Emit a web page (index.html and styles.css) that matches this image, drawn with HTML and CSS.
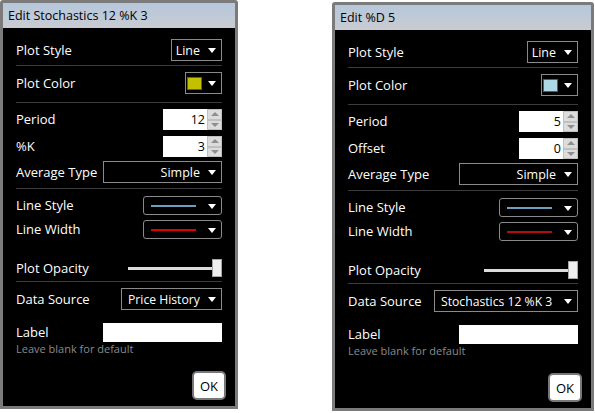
FILE: index.html
```html
<!DOCTYPE html>
<html>
<head>
<meta charset="utf-8">
<link rel="stylesheet" href="styles.css">
</head>
<body>
<div class="desk">
  <div class="win win-a">
    <div class="title">Edit Stochastics 12 %K 3</div>
    <div class="content">
      <div class="row r-style"><span class="lbl">Plot Style</span><div class="dd dd-style"><span class="val">Line</span><i class="arrow"></i></div></div>
      <div class="sep s1"></div>
      <div class="row r-color"><span class="lbl">Plot Color</span><div class="dd dd-color"><span class="swatch sw-yellow"></span><i class="arrow"></i></div></div>
      <div class="sep s2"></div>
      <div class="row r-num1"><span class="lbl">Period</span><div class="num"><span class="numval">12</span><span class="spin"><i class="up"></i><i class="down"></i></span></div></div>
      <div class="row r-num2"><span class="lbl">%K</span><div class="num"><span class="numval">3</span><span class="spin"><i class="up"></i><i class="down"></i></span></div></div>
      <div class="row r-avg"><span class="lbl">Average Type</span><div class="dd dd-avg"><span class="val">Simple</span><i class="arrow"></i></div></div>
      <div class="sep s3"></div>
      <div class="row r-ls"><span class="lbl">Line Style</span><div class="dd dd-line"><span class="ln ln-blue"></span><i class="arrow"></i></div></div>
      <div class="row r-lw"><span class="lbl">Line Width</span><div class="dd dd-line"><span class="ln ln-red"></span><i class="arrow"></i></div></div>
      <div class="row r-op"><span class="lbl">Plot Opacity</span><div class="slider"><span class="track"></span><span class="thumb"></span></div></div>
      <div class="sep s4"></div>
      <div class="row r-ds"><span class="lbl">Data Source</span><div class="dd dd-ds dd-ds-a"><span class="val">Price History</span><i class="arrow"></i></div></div>
      <div class="row r-label"><span class="lbl">Label</span><div class="txt"></div></div>
      <div class="hint">Leave blank for default</div>
      <div class="foot"><button class="ok">OK</button></div>
    </div>
  </div>

  <div class="win win-b">
    <div class="title">Edit %D 5</div>
    <div class="content">
      <div class="row r-style"><span class="lbl">Plot Style</span><div class="dd dd-style"><span class="val">Line</span><i class="arrow"></i></div></div>
      <div class="sep s1"></div>
      <div class="row r-color"><span class="lbl">Plot Color</span><div class="dd dd-color"><span class="swatch sw-blue"></span><i class="arrow"></i></div></div>
      <div class="sep s2"></div>
      <div class="row r-num1"><span class="lbl">Period</span><div class="num"><span class="numval">5</span><span class="spin"><i class="up"></i><i class="down"></i></span></div></div>
      <div class="row r-num2"><span class="lbl">Offset</span><div class="num"><span class="numval">0</span><span class="spin"><i class="up"></i><i class="down"></i></span></div></div>
      <div class="row r-avg"><span class="lbl">Average Type</span><div class="dd dd-avg"><span class="val">Simple</span><i class="arrow"></i></div></div>
      <div class="sep s3"></div>
      <div class="row r-ls"><span class="lbl">Line Style</span><div class="dd dd-line"><span class="ln ln-blue2"></span><i class="arrow"></i></div></div>
      <div class="row r-lw"><span class="lbl">Line Width</span><div class="dd dd-line"><span class="ln ln-darkred"></span><i class="arrow"></i></div></div>
      <div class="row r-op"><span class="lbl">Plot Opacity</span><div class="slider"><span class="track"></span><span class="thumb"></span></div></div>
      <div class="sep s4"></div>
      <div class="row r-ds"><span class="lbl">Data Source</span><div class="dd dd-ds dd-ds-b"><span class="val">Stochastics 12 %K 3</span><i class="arrow"></i></div></div>
      <div class="row r-label"><span class="lbl">Label</span><div class="txt"></div></div>
      <div class="hint">Leave blank for default</div>
      <div class="foot"><button class="ok">OK</button></div>
    </div>
  </div>
</div>
</body>
</html>
```

FILE: styles.css
```css
html, body {
  margin: 0;
  padding: 0;
  background: #ffffff;
}
body {
  font-family: "Open Sans", "Noto Sans", sans-serif;
  font-size: 12px;
  width: 595px;
  height: 413px;
  overflow: hidden;
}
.desk {
  display: flex;
  align-items: flex-start;
  gap: 94px;
}
.win {
  border: 3px solid #7b7b7b;
  border-radius: 3px 3px 0 0;
  background: #000;
  box-sizing: border-box;
  height: 409px;
  display: flex;
  flex-direction: column;
}
.win-a { width: 238px; }
.win-b { width: 262px; margin-top: 2px; }
.title {
  height: 25px;
  line-height: 25px;
  padding-left: 5px;
  background: linear-gradient(#b6c7dc, #c9ccd1);
  color: #000;
  font-size: 12.5px;
  white-space: nowrap;
}
.content {
  flex: 1;
  padding: 11px 13px 0 13px;
  color: #fff;
  display: flex;
  flex-direction: column;
}
.row {
  display: flex;
  justify-content: space-between;
  align-items: center;
}
.lbl {
  white-space: nowrap;
  color: #fff;
  font-size: 13px;
  margin-top: -1px;
}
.sep {
  height: 1px;
  background: #3c3c3c;
}
.r-style { height: 22px; }
.s1 { margin-top: 4px; }
.r-color { height: 22px; margin-top: 6px; }
.s2 { margin-top: 8px; }
.r-num1 { height: 21px; margin-top: 6px; }
.r-num2 { height: 21px; margin-top: 6px; }
.r-avg { height: 22px; margin-top: 4px; }
.s3 { margin-top: 5px; }
.r-ls { height: 19px; margin-top: 7px; }
.r-lw { height: 19px; margin-top: 5px; }
.r-op { height: 18px; margin-top: 20px; }
.s4 { margin-top: 4px; }
.r-ds { height: 22px; margin-top: 6px; }
.r-label { height: 19px; margin-top: 13px; }

.dd {
  box-sizing: border-box;
  height: 100%;
  border: 1px solid #8a8a8a;
  display: flex;
  align-items: center;
  justify-content: flex-end;
  padding-right: 21px;
  position: relative;
  color: #fff;
  white-space: nowrap;
  font-size: 12.5px;
}
.arrow {
  position: absolute;
  right: 5px;
  top: 50%;
  margin-top: -2px;
  width: 0;
  height: 0;
  border-left: 4px solid transparent;
  border-right: 4px solid transparent;
  border-top: 5px solid #fff;
}
.dd-style { width: 51px; }
.dd-color { width: 37px; }
.swatch {
  width: 13px;
  height: 11px;
  border: 1px solid #5a5a5a;
  margin-right: -2px;
}
.sw-yellow { background: #c2c000; }
.sw-blue { background: #add8e6; }
.dd-avg { width: 119px; }
.dd-line {
  width: 79px;
  border-radius: 3px;
  padding-right: 25px;
}
.ln { width: 45px; height: 2px; }
.ln-blue { background: #6d9fbd; }
.ln-red { background: #e00000; }
.ln-blue2 { background: #6d9fbd; }
.ln-darkred { background: #b30c0c; }
.dd-ds { justify-content: flex-start; padding-left: 6px; font-size: 12.2px; }
.dd-ds-a { width: 101px; }
.dd-ds-b { width: 144px; }

.num {
  display: flex;
  height: 100%;
  width: 59px;
}
.numval {
  width: 44px;
  background: #fff;
  color: #000;
  font-size: 12.5px;
  box-sizing: border-box;
  padding-right: 2px;
  display: flex;
  align-items: center;
  justify-content: flex-end;
}
.spin {
  width: 15px;
  display: flex;
  flex-direction: column;
  background: #d4d4d4;
}
.spin i {
  flex: 1;
  position: relative;
  border: 1px solid #c0c0c0;
  background: #dcdcdc;
}
.spin i::after {
  content: "";
  position: absolute;
  left: 50%;
  top: 50%;
  margin-left: -4px;
  width: 0;
  height: 0;
  border-left: 4px solid transparent;
  border-right: 4px solid transparent;
}
.spin .up::after { border-bottom: 4px solid #8e8e8e; margin-top: -2px; }
.spin .down::after { border-top: 4px solid #8e8e8e; margin-top: -2px; }

.slider {
  width: 94px;
  height: 100%;
  position: relative;
  display: flex;
  align-items: center;
}
.track {
  width: 86px;
  height: 3px;
  background: #dcdcdc;
}
.thumb {
  position: absolute;
  right: 0;
  top: 0;
  width: 10px;
  height: 18px;
  box-sizing: border-box;
  background: #efefef;
  border: 1px solid #a5a5a5;
}
.txt {
  width: 119px;
  height: 100%;
  background: #fff;
}
.hint {
  font-size: 11px;
  color: #8a8a8a;
  height: 14px;
  line-height: 14px;
}
.foot {
  display: flex;
  justify-content: flex-end;
  margin-top: 15px;
  margin-right: -4px;
}
.ok {
  width: 34px;
  height: 29px;
  box-sizing: border-box;
  background: #fff;
  border: 2px solid #777;
  border-radius: 5px;
  font-family: "Open Sans", "Noto Sans", sans-serif;
  font-size: 13px;
  color: #000;
  padding: 0;
}
```
